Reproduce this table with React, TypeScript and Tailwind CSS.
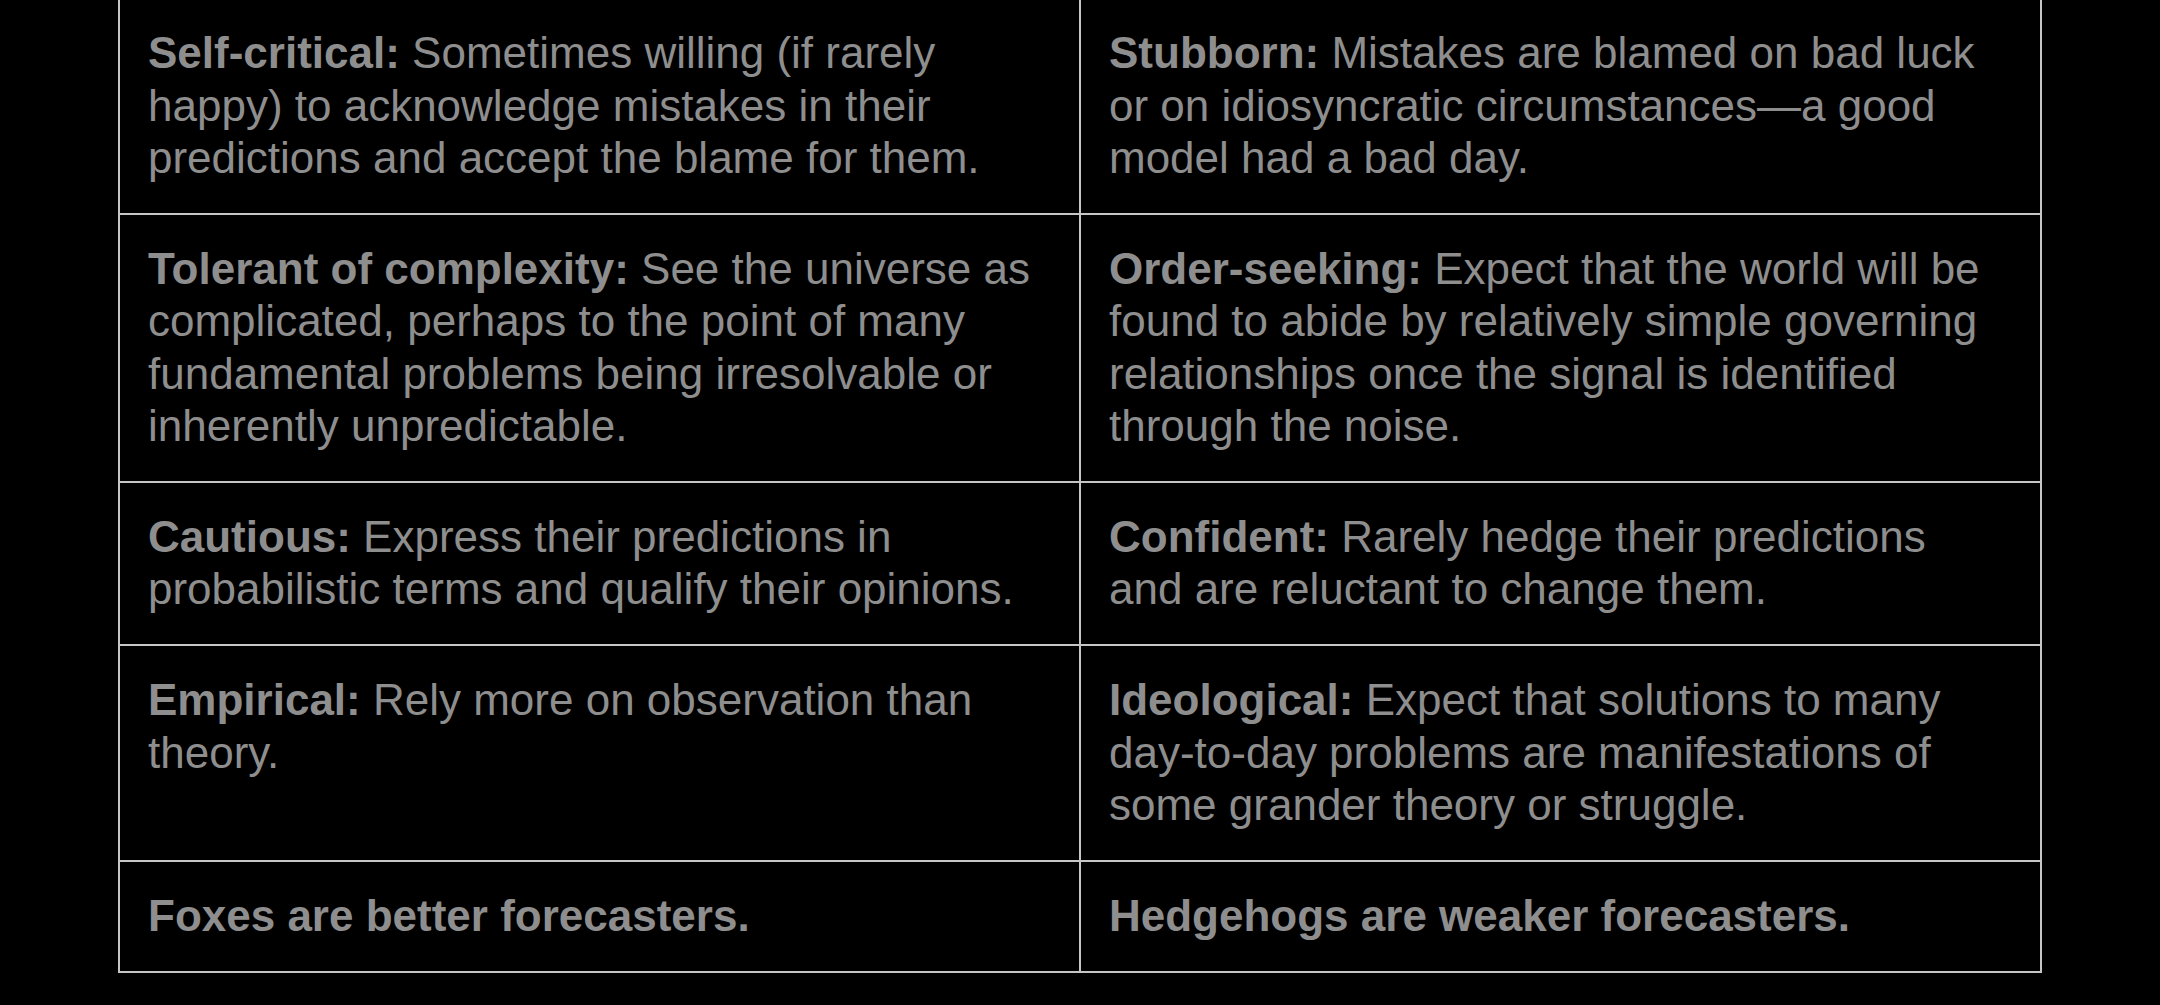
const rows: [string, string, string, string][] = [
  [
    "Self-critical:",
    "Sometimes willing (if rarely happy) to acknowledge mistakes in their predictions and accept the blame for them.",
    "Stubborn:",
    "Mistakes are blamed on bad luck or on idiosyncratic circumstances\u2014a good model had a bad day.",
  ],
  [
    "Tolerant of complexity:",
    "See the universe as complicated, perhaps to the point of many fundamental problems being irresolvable or inherently unpredictable.",
    "Order-seeking:",
    "Expect that the world will be found to abide by relatively simple governing relationships once the signal is identified through the noise.",
  ],
  [
    "Cautious:",
    "Express their predictions in probabilistic terms and qualify their opinions.",
    "Confident:",
    "Rarely hedge their predictions and are reluctant to change them.",
  ],
  [
    "Empirical:",
    "Rely more on observation than theory.",
    "Ideological:",
    "Expect that solutions to many day-to-day problems are manifestations of some grander theory or struggle.",
  ],
]

function Cell({ label, text }: { label: string; text?: string }) {
  return (
    <td className="w-1/2 border-2 border-[#c6c6c6] pl-[28px] pr-[40px] py-[28.3px] align-top">
      <span className="font-bold">{label}</span>
      {text ? " " + text : null}
    </td>
  )
}

export default function App() {
  return (
    <div className="min-h-[1005px] w-full overflow-hidden bg-black">
      <table
        className="mx-auto -mt-[3px] w-[1924px] table-fixed border-collapse text-[44px] leading-[1.19] text-[#8e8e8e]"
        style={{ fontFamily: '"Liberation Sans", Arial, sans-serif' }}
      >
        <tbody>
          {rows.map((r, i) => (
            <tr key={i}>
              <Cell label={r[0]} text={r[1]} />
              <Cell label={r[2]} text={r[3]} />
            </tr>
          ))}
          <tr>
            <Cell label="Foxes are better forecasters." />
            <Cell label="Hedgehogs are weaker forecasters." />
          </tr>
        </tbody>
      </table>
    </div>
  )
}
